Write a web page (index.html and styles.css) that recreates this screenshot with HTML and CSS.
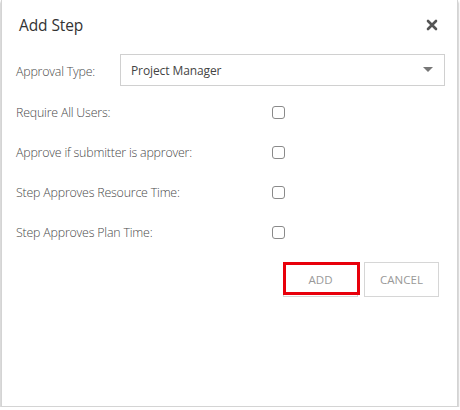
FILE: index.html
```html
<!DOCTYPE html>
<html>
<head>
<meta charset="utf-8">
<link rel="stylesheet" href="styles.css">
</head>
<body>
<div class="dialog">
  <div class="header">
    <div class="title">Add Step</div>
    <svg class="close" width="12" height="12" viewBox="0 0 12 12"><path d="M2 2 L10 10 M10 2 L2 10" stroke="#555" stroke-width="2.6" stroke-linecap="round"/></svg>
  </div>
  <div class="body">
    <div class="row row-select">
      <div class="label">Approval Type:</div>
      <div class="select">
        <span>Project Manager</span>
        <svg class="caret" width="10" height="6" viewBox="0 0 10 6"><path d="M0 0 H10 L5 5 Z" fill="#777"/></svg>
      </div>
    </div>
    <div class="row"><div class="label">Require All Users:</div><span class="check"></span></div>
    <div class="row"><div class="label">Approve if submitter is approver:</div><span class="check"></span></div>
    <div class="row"><div class="label">Step Approves Resource Time:</div><span class="check"></span></div>
    <div class="row"><div class="label">Step Approves Plan Time:</div><span class="check"></span></div>
    <div class="actions">
      <div class="btn-wrap">
        <button class="btn">ADD</button>
        <span class="highlight"></span>
      </div>
      <button class="btn">CANCEL</button>
    </div>
  </div>
</div>
</body>
</html>
```
FILE: styles.css
```css
html, body {
  margin: 0;
  padding: 0;
  background: #fff;
}
body {
  font-family: "Open Sans", "Noto Sans", sans-serif;
  color: #555;
}
.dialog {
  box-sizing: border-box;
  margin-left: 1px;
  width: 457px;
  height: 407px;
  border: 1px solid #d4d4d4;
  border-top: none;
  box-shadow: 0 2px 2px rgba(0, 0, 0, 0.45);
  background: #fff;
}
.header {
  display: flex;
  align-items: center;
  justify-content: space-between;
  height: 49px;
  padding: 0 19px 0 17px;
}
.title {
  font-size: 15.5px;
  color: #333;
  letter-spacing: -0.1px;
}
.close {
  display: block;
}
.body {
  padding: 0 12px 0 14px;
}
.row {
  display: flex;
  align-items: center;
  height: 40px;
}
.row-select {
  height: 43px;
  align-items: flex-start;
  box-sizing: border-box;
  padding-top: 5px;
}
.row-select .label {
  align-self: center;
  margin-top: -4px;
}
.label {
  font-size: 12.4px;
  color: #4a4a4a;
  letter-spacing: -0.2px;
  width: 256px;
  font-weight: 300;
}
.row-select .label {
  width: 104px;
}
.select {
  box-sizing: border-box;
  flex: 1;
  height: 32px;
  border: 1px solid #d0d0d0;
  display: flex;
  align-items: center;
  justify-content: space-between;
  padding: 0 11px 0 10px;
  font-size: 12px;
  color: #444;
  letter-spacing: -0.1px;
}
.caret {
  display: block;
}
.check {
  box-sizing: border-box;
  width: 13px;
  height: 13px;
  border: 1px solid #8a8a8a;
  border-radius: 3px;
}
.actions {
  display: flex;
  justify-content: flex-end;
  gap: 6px;
  margin-top: 10px;
  padding-right: 6px;
}
.btn-wrap {
  position: relative;
}
.btn {
  box-sizing: border-box;
  height: 35px;
  width: 75px;
  background: #fff;
  border: 1px solid #d6d6d6;
  font-family: "Open Sans", "Noto Sans", sans-serif;
  font-size: 11.5px;
  color: #999;
  padding: 0;
  display: block;
}
.highlight {
  position: absolute;
  left: 0;
  top: 0;
  width: 77px;
  height: 33px;
  box-sizing: border-box;
  border: 3px solid #e8000b;
}
```
